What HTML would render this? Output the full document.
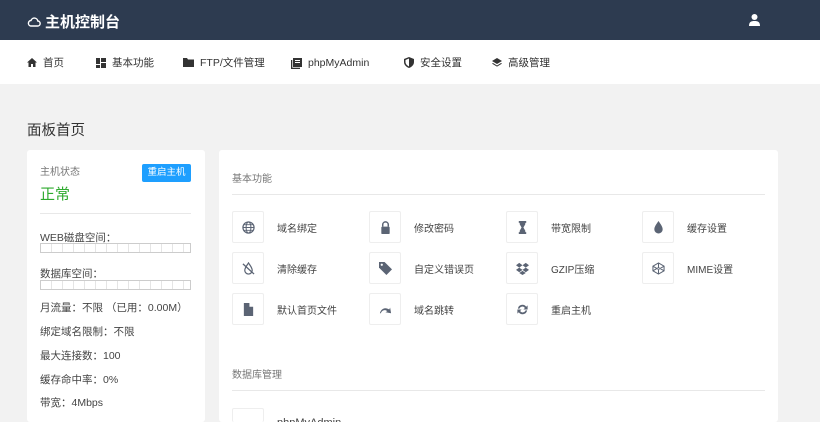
<!DOCTYPE html>
<html style="width:820px;height:422px;overflow:hidden"><head><meta charset="utf-8"><style>
*{margin:0;padding:0;box-sizing:border-box}
body{width:820px;height:422px;overflow:hidden;background:#f2f2f2;font-family:"Liberation Sans","Noto Sans CJK SC",sans-serif;color:#333;position:relative}
.hd{position:absolute;left:0;top:0;width:820px;height:40px;background:#2d3b50}
.logo{position:absolute;left:27px;top:11px;color:#fff;font-size:15px;font-weight:bold;display:flex;align-items:center;gap:4px}
.nav{position:absolute;left:0;top:40px;width:820px;height:44px;background:#fff}
.nav span{position:absolute;top:15px;font-size:10.5px;color:#333;display:flex;align-items:center;gap:6px}
.ab{position:absolute}
.card{position:absolute;background:#fff;border-radius:3px}
.t{position:absolute;font-size:10.5px;color:#444;white-space:nowrap}
.bar{position:absolute;left:40px;width:151px;height:10px;border:1px solid #ccc;background:repeating-linear-gradient(90deg,#fff 0 10px,#e5e5e5 10px 11px)}
.box{position:absolute;width:32px;height:32px;border:1px solid #eee;border-radius:2px;display:flex;align-items:center;justify-content:center}
.box svg{width:13px;height:13px;fill:#5b6474}
.lbl{position:absolute;font-size:10px;color:#444}
</style></head><body>
<div class="hd"><div class="logo"><svg width="14" height="12" viewBox="0 0 14 12"><path d="M3.5 10h7a2.5 2.5 0 0 0 .3-5A3.5 3.5 0 0 0 4 4.5 2.8 2.8 0 0 0 3.5 10z" fill="none" stroke="#fff" stroke-width="1.4"/></svg>主机控制台</div>
<svg class="ab" style="left:749px;top:14px" width="11" height="12" viewBox="0 0 11 12"><circle cx="5.5" cy="3" r="3" fill="#fff"/><path d="M0 12c0-4 2-5 5.5-5S11 8 11 12z" fill="#fff"/></svg></div>
<div class="nav">
<span style="left:27px"><svg width="10" height="9" viewBox="0 0 10 9"><path d="M5 0 0 4.5h1.5V9h2.5V6h2v3h2.5V4.5H10z" fill="#333"/></svg>首页</span>
<span style="left:96px"><svg width="10" height="10" viewBox="0 0 10 10" fill="#333"><rect width="4" height="6"/><rect x="5" width="5" height="4"/><rect y="7" width="4" height="3"/><rect x="5" y="5" width="5" height="5"/></svg>基本功能</span>
<span style="left:183px"><svg width="11" height="9" viewBox="0 0 11 9"><path d="M0 0h4l1 1.5h6V9H0z" fill="#333"/></svg>FTP/文件管理</span>
<span style="left:291px;top:17px"><svg width="11" height="11" viewBox="0 0 11 11" fill="#333"><rect x="2" width="9" height="9"/><rect y="2" width="1.3" height="9"/><rect y="9.7" width="9" height="1.3"/><rect x="4" y="2" width="5" height="1" fill="#fff"/><rect x="4" y="4" width="5" height="1" fill="#fff"/></svg>phpMyAdmin</span>
<span style="left:404px"><svg width="10" height="11" viewBox="0 0 10 11"><path d="M5 0 10 2v3c0 3-2.5 5-5 6C2.5 10 0 8 0 5V2z" fill="#333"/><path d="M5 1.5v8C3 8.5 1.5 7 1.5 5V3z" fill="#fff"/></svg>安全设置</span>
<span style="left:492px"><svg width="10" height="10" viewBox="0 0 10 10" fill="#333"><path d="M5 0 10 3 5 6 0 3z"/><path d="M1 5 5 7.5 9 5 10 5.6 5 8.6 0 5.6z"/></svg>高级管理</span>
</div>
<div class="ab" style="left:27px;top:119px;font-size:14.5px;color:#333">面板首页</div>

<div class="card" style="left:27px;top:150px;width:178px;height:272px"></div>
<div class="t" style="left:40px;top:163px;color:#777;font-size:10px">主机状态</div>
<div class="ab" style="left:142px;top:164px;width:49px;height:18px;background:#1e9fff;border-radius:2px;color:#fff;font-size:9.5px;text-align:center;line-height:18px">重启主机</div>
<div class="t" style="left:40px;top:183px;color:#2eaa2e;font-size:15px">正常</div>
<div class="ab" style="left:40px;top:213px;width:151px;height:1px;background:#e8e8e8"></div>
<div class="t" style="left:40px;top:230px">WEB磁盘空间：</div>
<div class="bar" style="top:243px"></div>
<div class="t" style="left:40px;top:266px">数据库空间：</div>
<div class="bar" style="top:280px"></div>
<div class="t" style="left:40px;top:300px">月流量：不限 （已用：0.00M）</div>
<div class="t" style="left:40px;top:324px">绑定域名限制：不限</div>
<div class="t" style="left:40px;top:348px">最大连接数：100</div>
<div class="t" style="left:40px;top:372px">缓存命中率：0%</div>
<div class="t" style="left:40px;top:395px">带宽：4Mbps</div>

<div class="card" style="left:219px;top:150px;width:559px;height:272px"></div>
<div class="t" style="left:232px;top:170px;color:#777;font-size:10px">基本功能</div>
<div class="ab" style="left:232px;top:194px;width:533px;height:1px;background:#e8e8e8"></div>
<div class="t" style="left:232px;top:366px;color:#777;font-size:10px">数据库管理</div>
<div class="ab" style="left:232px;top:390px;width:533px;height:1px;background:#e8e8e8"></div>

<div class="box" style="left:232px;top:211px"><svg viewBox="0 0 14 14"><circle cx="7" cy="7" r="6" fill="none" stroke="#5b6474" stroke-width="1.3"/><ellipse cx="7" cy="7" rx="2.6" ry="6" fill="none" stroke="#5b6474" stroke-width="1.1"/><path d="M1 7h12M2 4h10M2 10h10" stroke="#5b6474" stroke-width="1"/></svg></div><div class="lbl" style="left:277px;top:220px">域名绑定</div>
<div class="box" style="left:369px;top:211px"><svg viewBox="0 0 14 14"><path d="M4 6V4a3 3 0 0 1 6 0v2" fill="none" stroke="#5b6474" stroke-width="1.6"/><rect x="2.5" y="6" width="9" height="8" rx="1"/></svg></div><div class="lbl" style="left:414px;top:220px">修改密码</div>
<div class="box" style="left:506px;top:211px"><svg viewBox="0 0 14 14"><path d="M3 0h8v2h-1v1.5L8 7l2 3.5V12h1v2H3v-2h1v-1.5L6 7 4 3.5V2H3z"/></svg></div><div class="lbl" style="left:551px;top:220px">带宽限制</div>
<div class="box" style="left:642px;top:211px"><svg viewBox="0 0 14 14"><path d="M7 0C5 3 2.5 6 2.5 9a4.5 4.5 0 0 0 9 0C11.5 6 9 3 7 0z"/></svg></div><div class="lbl" style="left:687px;top:220px">缓存设置</div>

<div class="box" style="left:232px;top:252px"><svg viewBox="0 0 14 14"><path d="M7 1C5.5 3.5 3 6 3 9a4 4 0 0 0 8 0C11 6 8.5 3.5 7 1z" fill="none" stroke="#5b6474" stroke-width="1.3"/><path d="M1 2l12 11" stroke="#5b6474" stroke-width="1.4"/></svg></div><div class="lbl" style="left:277px;top:261px">清除缓存</div>
<div class="box" style="left:369px;top:252px"><svg viewBox="0 0 14 14"><path d="M0 0h6l8 8-6 6-8-8z"/><circle cx="3" cy="3" r="1.2" fill="#fff"/></svg></div><div class="lbl" style="left:414px;top:261px">自定义错误页</div>
<div class="box" style="left:506px;top:252px"><svg viewBox="0 0 14 14"><path d="M3.5 1 0 3.5 3.5 6 0 8.5l3.5 2.5L7 8.5 10.5 11 14 8.5 10.5 6 14 3.5 10.5 1 7 3.5zM7 3.5 10.5 6 7 8.5 3.5 6zM3.5 11.8 7 14l3.5-2.2L7 9.5z"/></svg></div><div class="lbl" style="left:551px;top:261px">GZIP压缩</div>
<div class="box" style="left:642px;top:252px"><svg viewBox="0 0 14 14"><path d="M7 1 13 4.5v5L7 13 1 9.5v-5z M1 4.5 7 8l6-3.5M7 8v5M1 9.5 7 6l6 3.5M7 1v5" fill="none" stroke="#5b6474" stroke-width="1.1"/></svg></div><div class="lbl" style="left:687px;top:261px">MIME设置</div>

<div class="box" style="left:232px;top:293px"><svg viewBox="0 0 14 14"><path d="M2 0h6l4 4v10H2zM8 0v4h4" /></svg></div><div class="lbl" style="left:277px;top:302px">默认首页文件</div>
<div class="box" style="left:369px;top:293px"><svg viewBox="0 0 14 14"><path d="M1 11C2 6 7 4 11 7l1-2 1 6-6-1 2-1.2C6 6.5 3 8 2 11z"/></svg></div><div class="lbl" style="left:414px;top:302px">域名跳转</div>
<div class="box" style="left:506px;top:293px"><svg viewBox="0 0 14 14"><path d="M2 6a5 5 0 0 1 9-2l1.5-1.5V7H8l1.6-1.6A3.3 3.3 0 0 0 3.7 6zM12 8a5 5 0 0 1-9 2l-1.5 1.5V7H6l-1.6 1.6a3.3 3.3 0 0 0 5.9-.6z"/></svg></div><div class="lbl" style="left:551px;top:302px">重启主机</div>
<div class="box" style="left:232px;top:408px;height:14px;border-bottom:none"></div>
<div class="lbl" style="left:277px;top:417px;font-size:11px">phpMyAdmin</div>
</body></html>
